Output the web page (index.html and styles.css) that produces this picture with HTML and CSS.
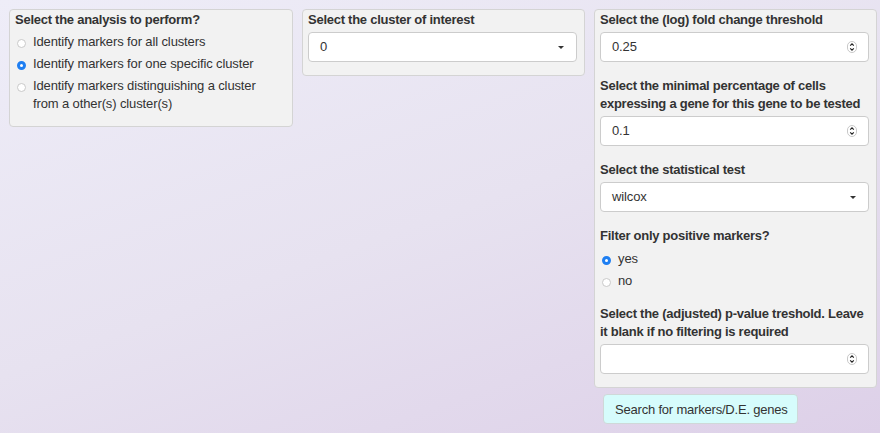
FILE: index.html
```html
<!DOCTYPE html>
<html>
<head>
<meta charset="utf-8">
<link rel="stylesheet" href="styles.css">
</head>
<body>
<div class="layout">
  <div class="col">
    <div class="well">
      <div class="group">
        <div class="label">Select the analysis to perform?</div>
        <div class="radios narrow">
          <div class="radio"><span class="dot"></span><span>Identify markers for all clusters</span></div>
          <div class="radio"><span class="dot on"></span><span>Identify markers for one specific cluster</span></div>
          <div class="radio"><span class="dot"></span><span>Identify markers distinguishing a cluster from a other(s) cluster(s)</span></div>
        </div>
      </div>
    </div>
  </div>
  <div class="col">
    <div class="well">
      <div class="group">
        <div class="label">Select the cluster of interest</div>
        <div class="control select"><span>0</span><span class="caret"></span></div>
      </div>
    </div>
  </div>
  <div class="col">
    <div class="well">
      <div class="group">
        <div class="label">Select the (log) fold change threshold</div>
        <div class="control number"><span>0.25</span><span class="spin"><svg width="10" height="12" viewBox="0 0 10 12"><rect x="0.5" y="0.5" width="9" height="11" rx="4.5" fill="#fff" stroke="#c8c8c8"/><path d="M3.2 4.6 L5 2.9 L6.8 4.6" fill="none" stroke="#222" stroke-width="1.2"/><path d="M3.2 7.4 L5 9.1 L6.8 7.4" fill="none" stroke="#222" stroke-width="1.2"/></svg></span></div>
      </div>
      <div class="group">
        <div class="label">Select the minimal percentage of cells expressing a gene for this gene to be tested</div>
        <div class="control number"><span>0.1</span><span class="spin"><svg width="10" height="12" viewBox="0 0 10 12"><rect x="0.5" y="0.5" width="9" height="11" rx="4.5" fill="#fff" stroke="#c8c8c8"/><path d="M3.2 4.6 L5 2.9 L6.8 4.6" fill="none" stroke="#222" stroke-width="1.2"/><path d="M3.2 7.4 L5 9.1 L6.8 7.4" fill="none" stroke="#222" stroke-width="1.2"/></svg></span></div>
      </div>
      <div class="group">
        <div class="label">Select the statistical test</div>
        <div class="control select"><span>wilcox</span><span class="caret"></span></div>
      </div>
      <div class="group">
        <div class="label">Filter only positive markers?</div>
        <div class="radios loose">
          <div class="radio"><span class="dot on"></span><span>yes</span></div>
          <div class="radio"><span class="dot"></span><span>no</span></div>
        </div>
      </div>
      <div class="group">
        <div class="label">Select the (adjusted) p-value treshold. Leave it blank if no filtering is required</div>
        <div class="control number"><span></span><span class="spin"><svg width="10" height="12" viewBox="0 0 10 12"><rect x="0.5" y="0.5" width="9" height="11" rx="4.5" fill="#fff" stroke="#c8c8c8"/><path d="M3.2 4.6 L5 2.9 L6.8 4.6" fill="none" stroke="#222" stroke-width="1.2"/><path d="M3.2 7.4 L5 9.1 L6.8 7.4" fill="none" stroke="#222" stroke-width="1.2"/></svg></span></div>
      </div>
    </div>
    <button class="btn">Search for markers/D.E. genes</button>
  </div>
</div>
</body>
</html>
```

FILE: styles.css
```css
html, body {
  margin: 0;
  height: 100%;
}
body {
  padding: 9px 0 0 9px;
  box-sizing: border-box;
  background: linear-gradient(160deg, #eeedf8 0%, #e7e2f0 50%, #ddd0e8 100%);
  font-family: "Liberation Sans", Arial, sans-serif;
  font-size: 13px;
  line-height: 18px;
  letter-spacing: -0.12px;
  color: #333;
}
.layout {
  display: grid;
  grid-template-columns: 284px 283px 283px;
  column-gap: 9px;
  align-items: start;
}
.col {
  display: flex;
  flex-direction: column;
  align-items: flex-start;
}
.well {
  align-self: stretch;
  background: #f2f2f2;
  border: 1px solid #d4d4d4;
  border-radius: 4px;
  padding: 1px 7px 13px 5px;
  display: flex;
  flex-direction: column;
  gap: 15px;
}
.group {
  display: flex;
  flex-direction: column;
  gap: 3px;
}
.label {
  font-weight: bold;
  letter-spacing: -0.26px;
}
.radios {
  display: flex;
  flex-direction: column;
  gap: 4px;
  padding-top: 1px;
}
.radios.narrow {
  padding-right: 16px;
}
.radios.loose {
  padding-top: 2px;
}
.radio {
  display: flex;
  align-items: flex-start;
}
.dot {
  flex: none;
  width: 7px;
  height: 7px;
  margin: 6px 7px 0 2px;
  border: 1px solid #c9c9c9;
  border-radius: 50%;
  background: #fff;
}
.dot.on {
  width: 3px;
  height: 3px;
  border: 3px solid #1f7ff2;
  background: #fff;
}
.control {
  height: 30px;
  box-sizing: border-box;
  background: #fff;
  border: 1px solid #ccc;
  border-radius: 4px;
  display: flex;
  align-items: center;
  justify-content: space-between;
  padding: 0 11px 0 11px;
}
.caret {
  width: 0;
  height: 0;
  border-left: 3px solid transparent;
  border-right: 3px solid transparent;
  border-top: 3px solid #333;
  margin-right: 1px;
}
.spin {
  display: flex;
}
.btn {
  margin: 6px 0 0 9px;
  height: 30px;
  padding: 0 9px 0 11px;
  background: #d6fcfc;
  border: 1px solid #cfd8d8;
  border-radius: 4px;
  font-family: "Liberation Sans", Arial, sans-serif;
  font-size: 13px;
  letter-spacing: -0.2px;
  color: #333;
}
```
